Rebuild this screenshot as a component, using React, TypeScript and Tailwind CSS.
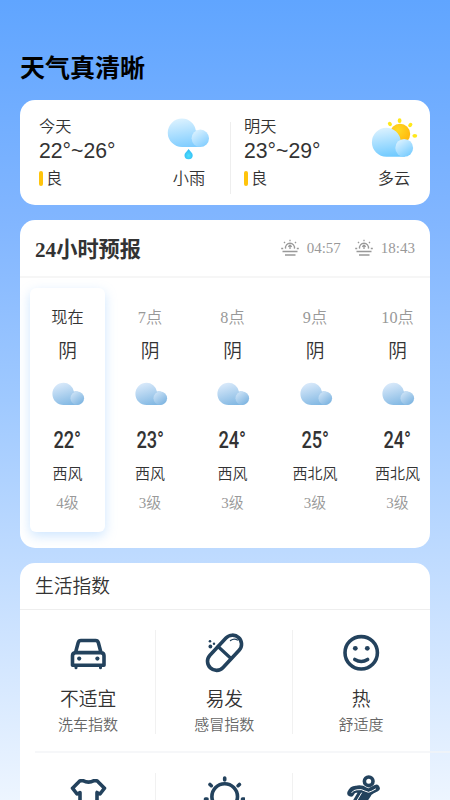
import type { ReactNode } from "react";

const days = [
  { name: "今天", range: "22°~26°", air: "良", weather: "小雨", icon: <RainIcon /> },
  { name: "明天", range: "23°~29°", air: "良", weather: "多云", icon: <SunCloudIcon /> },
];

const hours = [
  { time: "现在", temp: "22°", wind: "西风", level: "4级" },
  { time: "7点", temp: "23°", wind: "西风", level: "3级" },
  { time: "8点", temp: "24°", wind: "西风", level: "3级" },
  { time: "9点", temp: "25°", wind: "西北风", level: "3级" },
  { time: "10点", temp: "24°", wind: "西北风", level: "3级" },
];

function RainIcon() {
  return (
    <svg width="60" height="60" viewBox="0 0 60 60">
      <defs>
        <linearGradient id="rainBig" x1="0.3" y1="0" x2="0.5" y2="1">
          <stop offset="0" stopColor="#dcf2ff" />
          <stop offset="1" stopColor="#80cdff" />
        </linearGradient>
        <linearGradient id="rainSmall" x1="0.1" y1="0.1" x2="0.7" y2="1">
          <stop offset="0" stopColor="#dcf2ff" />
          <stop offset="1" stopColor="#84ceff" />
        </linearGradient>
        <radialGradient id="drop" cx="0.5" cy="0.65" r="0.5">
          <stop offset="0" stopColor="#4fe0fb" />
          <stop offset="1" stopColor="#35bff6" />
        </radialGradient>
      </defs>
      <path d="M22 8.5a14 14 0 0 1 13.8 12A9 9 0 0 1 40 37H22a14.2 14.2 0 0 1 0-28.5z" fill="url(#rainBig)" />
      <circle cx="40.3" cy="28.3" r="8.7" fill="url(#rainSmall)" />
      <path d="M28.6 39c2.2 2.8 4.1 4.3 4.1 6.2a4.1 4.1 0 0 1-8.2 0c0-1.9 1.9-3.4 4.1-6.2z" fill="url(#drop)" />
    </svg>
  );
}

function SunCloudIcon() {
  return (
    <svg width="60" height="60" viewBox="0 0 60 60">
      <defs>
        <radialGradient id="sun" cx="0.4" cy="0.3" r="0.7">
          <stop offset="0" stopColor="#ffda24" />
          <stop offset="1" stopColor="#ffb60c" />
        </radialGradient>
        <linearGradient id="cloudBig" x1="0.3" y1="0" x2="0.5" y2="1">
          <stop offset="0" stopColor="#dcf2ff" />
          <stop offset="1" stopColor="#70caff" />
        </linearGradient>
        <linearGradient id="cloudSmall" x1="0.1" y1="0.1" x2="0.7" y2="1">
          <stop offset="0" stopColor="#dcf2ff" />
          <stop offset="1" stopColor="#78ccff" />
        </linearGradient>
      </defs>
      <circle cx="35" cy="24" r="10.2" fill="url(#sun)" />
      <g fill="#ffe81a">
        <ellipse cx="24.9" cy="14" rx="1.8" ry="2.3" transform="rotate(-40 24.9 14)" />
        <ellipse cx="34.6" cy="10.7" rx="1.9" ry="2.4" />
        <ellipse cx="45.3" cy="15" rx="1.8" ry="2.4" transform="rotate(42 45.3 15)" />
        <ellipse cx="49.8" cy="25.8" rx="2.4" ry="1.9" />
      </g>
      <path d="M21.4 17.8a14.5 14.5 0 0 1 14.3 13A8.8 8.8 0 0 1 39.4 46.8H21.4a14.5 14.5 0 0 1 0-29z" fill="url(#cloudBig)" />
      <circle cx="39.2" cy="37.9" r="8.9" fill="url(#cloudSmall)" />
    </svg>
  );
}

function OvercastIcon({ id }: { id: string }) {
  return (
    <svg width="36" height="36" viewBox="0 0 36 36">
      <defs>
        <linearGradient id={id + "a"} x1="0.2" y1="0" x2="0.6" y2="1">
          <stop offset="0" stopColor="#dcebfb" />
          <stop offset="1" stopColor="#82b8e3" />
        </linearGradient>
        <linearGradient id={id + "b"} x1="0.1" y1="0.1" x2="0.7" y2="0.9">
          <stop offset="0" stopColor="#cfe4f7" />
          <stop offset="1" stopColor="#82b7e2" />
        </linearGradient>
      </defs>
      <path d="M13.5 6.8a10.6 10.6 0 0 1 10.4 8.6 7 7 0 0 1 3.5 13.6H13.5a11.1 11.1 0 0 1 0-22.2z" fill={`url(#${id}a)`} />
      <circle cx="27.3" cy="22.2" r="6.8" fill={`url(#${id}b)`} />
    </svg>
  );
}

function SunriseIcon() {
  return (
    <svg width="18" height="18" viewBox="0 0 18 18" fill="none" stroke="#999999" strokeWidth="1.3">
      <path d="M4.6 9.7a4.5 4.5 0 1 1 8.8 0M9 10V6.3M7.3 7.8L9 6.2l1.7 1.6M9 .7v1.6M3 2.9l1 1.2M15 2.9l-1 1.2M.2 9.5h2M15.8 9.5h2M1.5 12.5h15M4 16h10.5" />
    </svg>
  );
}

function LineIcon({ children }: { children: ReactNode }) {
  return (
    <svg width="42" height="42" viewBox="0 0 42 42" fill="none" stroke="#23425d" strokeWidth="3.6" strokeLinejoin="round" strokeLinecap="round">
      {children}
    </svg>
  );
}

const lifeIndex = [
  {
    value: "不适宜",
    label: "洗车指数",
    icon: (
      <LineIcon>
        <path d="M8.5 20.6l2.7-10q.6-2.100 2.700-2.100h14.700q2.100 0 2.700 2.100l2.700 10M8.500 20.600h25.500q3 .2 3 3.200v9.400H5.500v-9.400q0-3 3-3.200z" />
        <path d="M9 33.500v2.200M33.500 33.500v2.200" strokeWidth="3" />
        <g fill="#23425d" stroke="none">
          <circle cx="12.2" cy="26.6" r="2.1" />
          <circle cx="30.4" cy="26.6" r="2.1" />
        </g>
      </LineIcon>
    ),
  },
  {
    value: "易发",
    label: "感冒指数",
    icon: (
      <LineIcon>
        <rect x="0.8" y="11.8" width="41.5" height="18" rx="9" transform="rotate(-47 21.5 20.800)" />
        <path d="M15 14.5L28 26.500" strokeWidth="3.2" />
        <path d="M27.500 8.500q3.500-2.500 7-.5" strokeWidth="1.4" />
        <g fill="#23425d" stroke="none">
          <circle cx="7" cy="9.200" r="1.300" />
          <circle cx="11" cy="11.700" r="1.200" />
          <circle cx="7.400" cy="14.500" r="1.900" />
        </g>
      </LineIcon>
    ),
  },
  {
    value: "热",
    label: "舒适度",
    icon: (
      <LineIcon>
        <circle cx="21.2" cy="20.8" r="16.2" />
        <path d="M14.800 27.500q6.500 4 12.800 0" />
        <g fill="#23425d" stroke="none">
          <circle cx="15.3" cy="16.3" r="2.4" />
          <circle cx="27.3" cy="16.3" r="2.4" />
        </g>
      </LineIcon>
    ),
  },
];

const moreIcons = [
  <LineIcon key="clothes">
    <path d="M13 5.7h3q5.500 2.800 11 0h3l7.500 7.500-4.500 5.800-3-1.500V37h-17V17.500l-3 1.500-4.500-5.800z" />
  </LineIcon>,
  <LineIcon key="uv">
    <circle cx="21.700" cy="21.500" r="12.800" />
    <path d="M21.700 3v2M7 9.500l1.300 1.200M36.400 9.500l-1.300 1.200M2.500 24h1.500M39.500 24h1.500" />
  </LineIcon>,
  <LineIcon key="sport">
    <circle cx="28.700" cy="6.300" r="4.300" />
    <g id="runner">
      <path d="M10.800 18q1.500-3.500 5-3.700 5.500-1.300 9 1.200 4 2.700 6.500.2l5-2.500M22 17l-6.500 11M28 19l-4 6 3 8" strokeWidth="7" />
      <path d="M11.800 17.500q1.500-2.500 5-2.700 5-1 8 1.200 4 2.500 6.800.2l4-2.200M21.500 18l-6 10" stroke="#ffffff" strokeWidth="1" />
    </g>
  </LineIcon>,
];

function DayCard({ day, first }: { day: (typeof days)[number]; first: boolean }) {
  return (
    <div className="relative flex h-full flex-1 justify-between pl-[19px] pr-[5px]">
      <div className="flex flex-col pt-[14px]">
        <span className="h-6 text-[16.2px] leading-6">{day.name}</span>
        <span className="h-6 text-[21.2px] leading-[26px]">{day.range}</span>
        <span className="mt-1 flex h-6 items-center text-[16.2px] leading-6">
          <i className="mr-[3px] h-[15px] w-1 rounded-[2px] bg-[#ffc40c]" />
          {day.air}
        </span>
      </div>
      <div className="flex w-[62px] flex-col items-center pt-[10px]">
        <span className="ml-[2px] h-[60px]">{day.icon}</span>
        <span className="-mt-1 h-6 text-[16.2px] leading-[25px]">{day.weather}</span>
      </div>
      {first && <div className="absolute right-[-6px] top-[22px] h-[72px] w-px bg-[#eeeeee]" />}
    </div>
  );
}

export default function App() {
  return (
    <div className="h-[800px] w-[450px] overflow-hidden bg-[linear-gradient(180deg,#60a5ff_0%,#82b6ff_28%,#9fc9ff_50%,#bfdbff_70%,#edf5ff_100%)] px-5 font-['Liberation_Serif','Noto_Sans_CJK_SC',serif] font-[350] text-[#333333]">
      <h1 className="pt-[51px] text-[25px] font-bold leading-[35px] text-black">天气真清晰</h1>

      {/* Two day summary */}
      <section className="mt-[14px] flex h-[105px] rounded-[15px] bg-white font-['Liberation_Sans','Noto_Sans_CJK_SC',sans-serif]">
        {days.map((day, i) => (
          <DayCard key={day.name} day={day} first={i === 0} />
        ))}
      </section>

      {/* Hourly forecast */}
      <section className="mt-[15px] h-[327.5px] overflow-hidden rounded-[15px] bg-white">
        <div className="flex h-[57.5px] items-center justify-between border-b-2 border-[#f6f6f6] px-[15px]">
          <h2 className="pt-[5px] text-[21.2px] font-bold leading-8">24小时预报</h2>
          <div className="flex items-center text-[15px] text-[#999999]">
            <SunriseIcon />
            <span className="ml-2">04:57</span>
            <span className="ml-[14px]">
              <SunriseIcon />
            </span>
            <span className="ml-2">18:43</span>
          </div>
        </div>
        <div className="flex gap-[7.5px] pl-[10px] pt-[10.5px]">
          {hours.map((hour, i) => (
            <div
              key={hour.time}
              className={
                "flex h-[244px] w-[75px] shrink-0 flex-col items-center rounded-[6px] " +
                (i === 0 ? "shadow-[0_4px_12px_rgba(120,185,255,0.36)]" : "")
              }
            >
              <span className={"mt-[18px] h-6 text-[16.2px] leading-6 " + (i === 0 ? "" : "text-[#999999]")}>{hour.time}</span>
              <span className="mt-[8px] h-[28px] text-[18.75px] leading-7">阴</span>
              <span className="mt-[10px] ml-px h-9">
                <OvercastIcon id={`cloud${i}`} />
              </span>
              <span className="mt-[14px] h-7 scale-x-[0.76] font-[Roboto] text-[24px] font-medium leading-7">{hour.temp}</span>
              <span className="mt-[8px] h-6 whitespace-nowrap text-[15px] leading-6">{hour.wind}</span>
              <span className="mt-[5px] h-6 text-[15px] leading-6 text-[#999999]">{hour.level}</span>
            </div>
          ))}
        </div>
      </section>

      {/* Life index */}
      <section className="mt-[15px] h-[400px] rounded-[15px] bg-white font-['Liberation_Sans','Noto_Sans_CJK_SC',sans-serif]">
        <h2 className="h-[47.5px] border-b border-[#eeeeee] pl-[15px] text-[18.75px] leading-[47px]">生活指数</h2>
        <div className="flex pt-5">
          {lifeIndex.map((item, i) => (
            <div
              key={item.label}
              className={"flex h-[104px] w-[136.25px] flex-col items-center " + (i < 2 ? "border-r border-[#f1f1f1]" : "")}
            >
              <span className="h-[56px] pt-[2px]">{item.icon}</span>
              <span className="ml-px h-[27px] text-[18.75px] leading-7">{item.value}</span>
              <span className="ml-px h-[21px] text-[15px] leading-[23px] text-[#666666]">{item.label}</span>
            </div>
          ))}
        </div>
        <div className="ml-[15px] mt-[17px] h-0.5 w-[420px] bg-[#f2f4f6]/70" />
        <div className="flex pt-5">
          {moreIcons.map((icon, i) => (
            <div
              key={i}
              className={"flex h-[104px] w-[136.25px] justify-center pt-[2px] " + (i < 2 ? "border-r border-[#f1f1f1]" : "")}
            >
              {icon}
            </div>
          ))}
        </div>
      </section>
    </div>
  );
}
